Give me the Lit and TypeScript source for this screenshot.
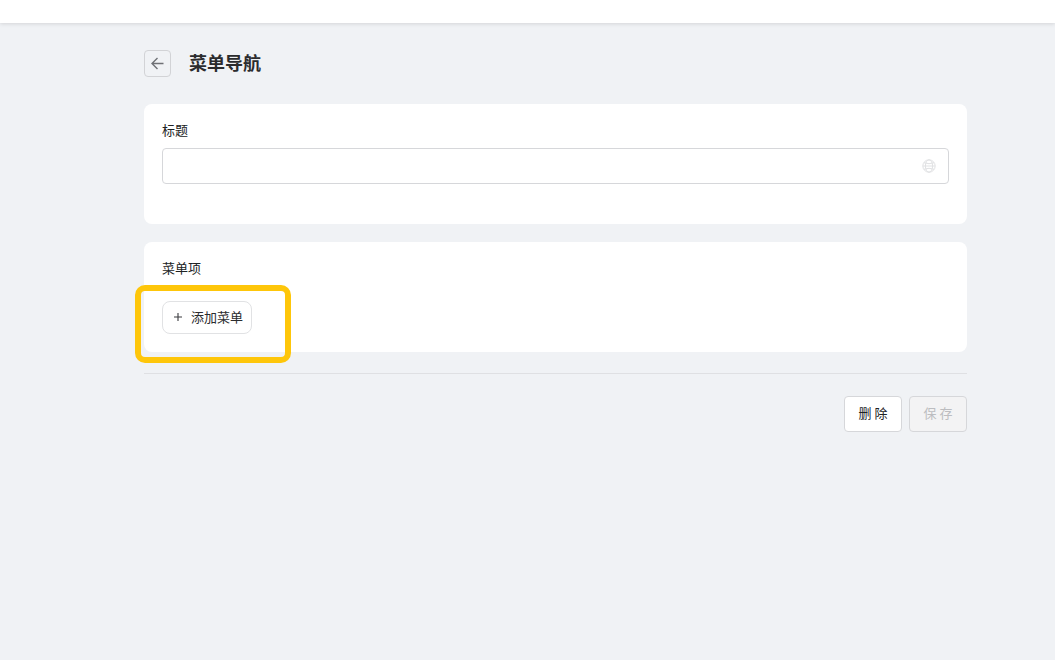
import { LitElement, html, css } from "lit";
import { customElement } from "lit/decorators.js";

@customElement("app-root")
export class AppRoot extends LitElement {
  static styles = css`
    :host {
      display: block;
      position: relative;
      height: 660px;
      overflow: hidden;
      background: #f0f2f5;
      font-family: "Inter", "Noto Sans CJK SC", "Liberation Sans", sans-serif;
      font-size: 13px;
      color: #202223;
    }
    .top {
      height: 23px;
      background: #fff;
      box-shadow: 0 1px 4px rgba(0, 0, 0, 0.12);
    }
    .main {
      width: 823px;
      margin-left: 144px;
      padding-top: 27px;
      display: flex;
      flex-direction: column;
    }
    .head {
      display: flex;
      align-items: center;
      gap: 18px;
      height: 27px;
      margin-bottom: 27px;
    }
    .back {
      box-sizing: border-box;
      width: 27px;
      height: 27px;
      border: 1px solid #d2d3d6;
      border-radius: 4px;
      display: flex;
      align-items: center;
      justify-content: center;
    }
    .back svg { display: block; }
    h1 {
      margin: 0;
      font-size: 18px;
      font-weight: 700;
      line-height: 26px;
      color: #2b2c2e;
    }
    .card {
      background: #fff;
      border-radius: 8px;
      padding: 18px 18px 0;
      box-sizing: border-box;
    }
    .c1 { height: 120px; margin-bottom: 18px; }
    .c2 { height: 110px; }
    .label {
      line-height: 16px;
      height: 18px;
      margin-bottom: 8px;
    }
    .input {
      box-sizing: border-box;
      height: 36px;
      border: 1px solid #d6d7da;
      border-radius: 4px;
      display: flex;
      align-items: center;
      justify-content: flex-end;
      padding-right: 12px;
    }
    .input svg { display: block; }
    .add {
      box-sizing: border-box;
      margin-top: 23px;
      width: 90px;
      height: 33px;
      border: 1px solid #e1e2e4;
      border-radius: 8px;
      display: flex;
      align-items: center;
      padding: 0 0 3px 10px;
      gap: 8px;
      background: #fff;
      color: #2b2c2e;
    }
    .plus { width: 10px; height: 10px; display: block; margin-top: 2px; }
    .rule {
      height: 1px;
      background: #dfe0e3;
      margin-top: 21px;
    }
    .actions {
      display: flex;
      justify-content: flex-end;
      gap: 7px;
      margin-top: 22px;
    }
    .btn {
      box-sizing: border-box;
      width: 58px;
      height: 36px;
      border: 1px solid #d6d7da;
      border-radius: 4px;
      display: flex;
      align-items: center;
      justify-content: center;
      background: #fff;
      letter-spacing: 3px;
      padding: 0 0 3px 3px;
    }
    .btn.off {
      background: #f3f3f4;
      color: #bcbdc0;
    }
    .mark {
      position: absolute;
      left: 135px;
      top: 285px;
      width: 156px;
      height: 78px;
      box-sizing: border-box;
      border: 6px solid #fec60a;
      border-radius: 10px;
    }
  `;

  render() {
    return html`
      <div class="top"></div>
      <div class="main">
        <div class="head">
          <div class="back">
            <svg width="15" height="15" viewBox="0 0 15 15" fill="none" stroke="#6f7176" stroke-width="1.4">
              <path d="M13.5 7.5H2M7.5 2L2 7.5 7.5 13"></path>
            </svg>
          </div>
          <h1>菜单导航</h1>
        </div>
        <div class="card c1">
          <div class="label">标题</div>
          <div class="input">
            <svg width="14" height="14" viewBox="0 0 14 14" fill="none" stroke="#e0e1e3" stroke-width="1">
              <circle cx="7" cy="7" r="6.2"></circle>
              <ellipse cx="7" cy="7" rx="3.6" ry="6.2"></ellipse>
              <path d="M2 3.8Q7 5.6 12 3.8M2 10.2Q7 8.4 12 10.2M1 7h12"></path>
            </svg>
          </div>
        </div>
        <div class="card c2">
          <div class="label">菜单项</div>
          <div class="add">
            <svg class="plus" viewBox="0 0 10 10" fill="none" stroke="#3a3b3e" stroke-width="1.1">
              <path d="M5 1v8M1 5h8"></path>
            </svg>
            <span>添加菜单</span>
          </div>
        </div>
        <div class="rule"></div>
        <div class="actions">
          <div class="btn">删除</div>
          <div class="btn off">保存</div>
        </div>
      </div>
      <div class="mark"></div>
    `;
  }
}
